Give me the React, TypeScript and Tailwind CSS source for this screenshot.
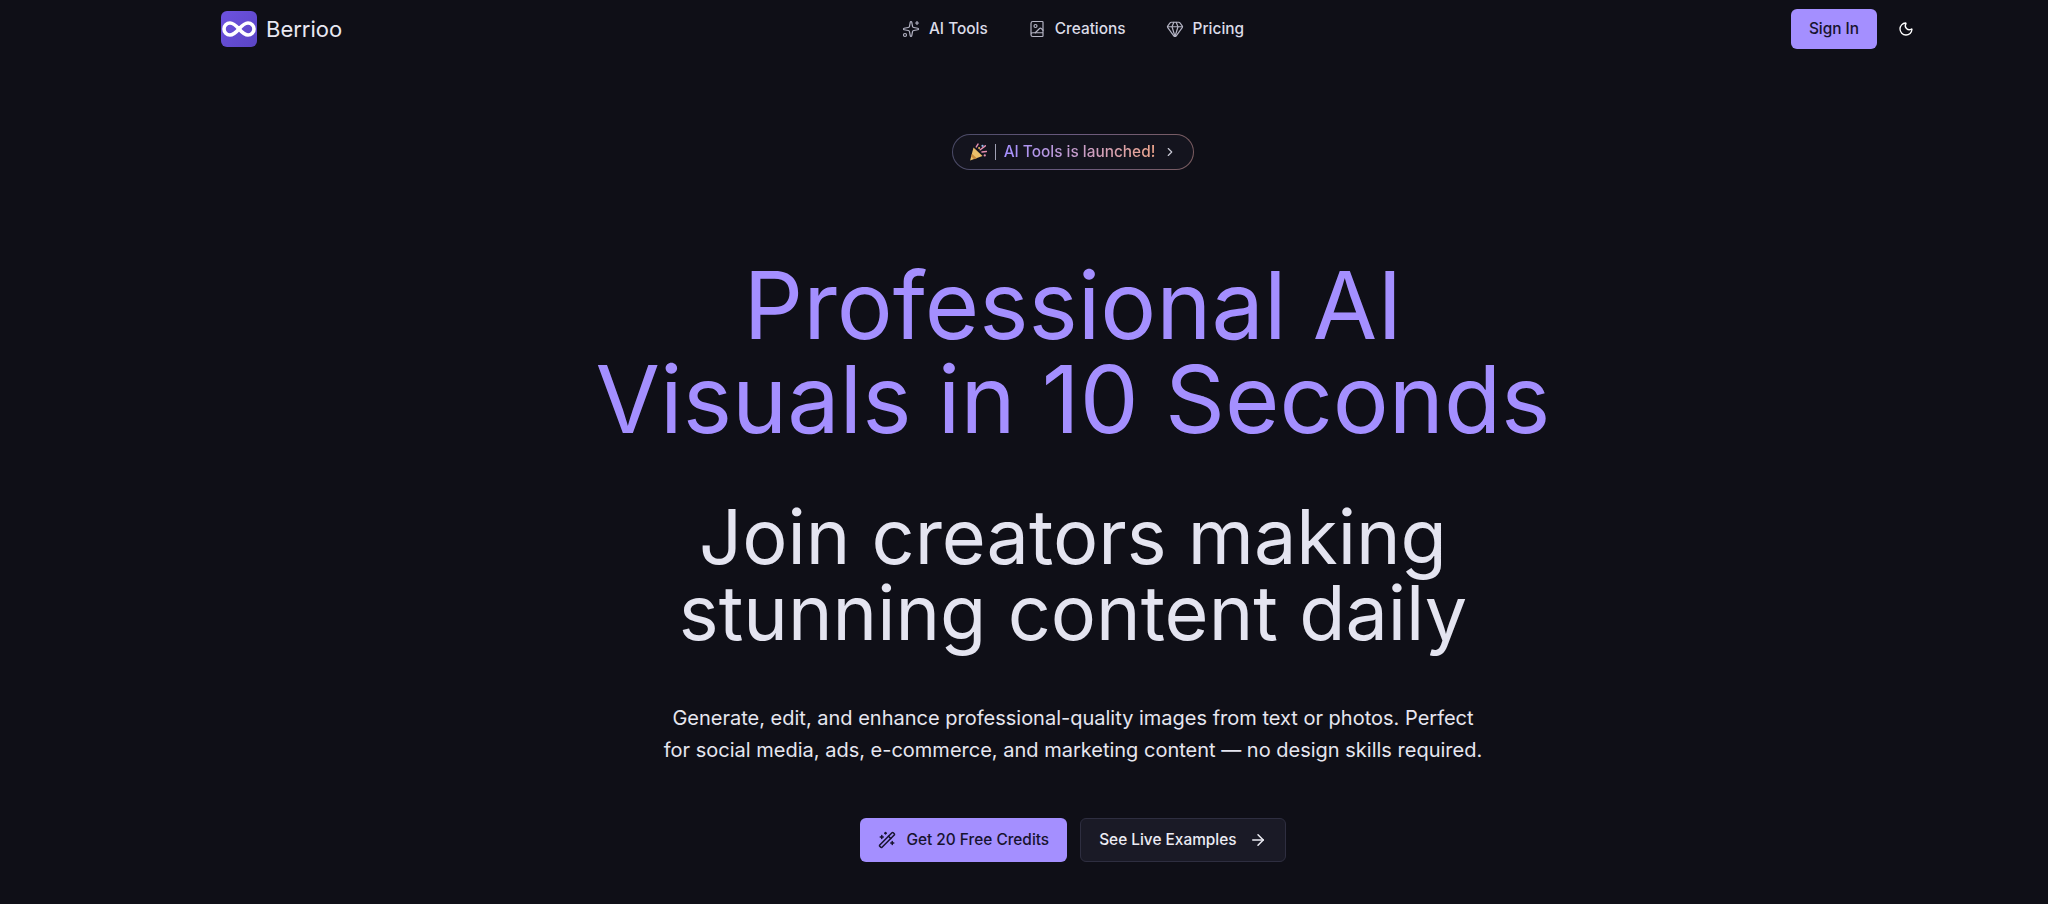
import { ArrowRight, BookImage, ChevronRight, Gem, Infinity as InfinityIcon, Moon, Sparkles, WandSparkles } from "lucide-react";

const links = [
  { label: "AI Tools", icon: Sparkles },
  { label: "Creations", icon: BookImage },
  { label: "Pricing", icon: Gem },
];

function Popper() {
  return (
    <svg viewBox="0 0 16 16" className="h-[18px] w-[18px] shrink-0">
      <path d="M1 15.5 L4 4 L12 11.5 Z" fill="#ecc06a" />
      <path d="M2.6 9.5 L7 13.5 L4.5 14.4 L2 12 Z" fill="#c98a3a" />
      <path d="M6.5 3.5 L8 1 M10 6 L14.5 2.5 M11.5 8 L15.5 7.5" stroke="#e58fb0" strokeWidth="1.3" strokeLinecap="round" />
      <circle cx="12" cy="2.5" r="1" fill="#8fb8e8" />
      <circle cx="9" cy="4.5" r="0.9" fill="#e9b95c" />
      <circle cx="14" cy="11" r="1" fill="#e58fb0" />
    </svg>
  );
}

export default function App() {
  return (
    <div className="h-[904px] overflow-hidden bg-[#0f0f17] pl-[98px] font-['Inter',sans-serif] text-[#e4e4f0]">
      <nav className="mx-auto flex h-[58px] w-[1704px] items-center justify-between">
        <div className="flex w-[400px] items-center gap-[9px]">
          <div className="flex h-9 w-9 items-center justify-center rounded-md bg-gradient-to-br from-[#6d52e0] to-[#5b45c4]">
            <InfinityIcon className="h-9 w-9 text-white" strokeWidth={2.4} />
          </div>
          <span className="text-[22px] text-[#e8e8f2]">Berrioo</span>
        </div>

        <div className="flex items-center gap-10">
          {links.map((l) => (
            <a key={l.label} className="flex items-center gap-[9px] text-[15.4px] font-[450] text-[#dcdce8]">
              <l.icon className="h-[18px] w-[18px] text-[#b4b4c4]" strokeWidth={1.6} />
              {l.label}
            </a>
          ))}
        </div>

        <div className="flex w-[400px] items-center justify-end">
          <button className="h-10 w-[86px] rounded-md bg-[#a48fff] text-[15.4px] font-[450] text-[#17132e]">Sign In</button>
          <div className="flex w-[48px] items-center pl-[21px]">
            <Moon className="h-4 w-4 shrink-0 text-white" strokeWidth={2} />
          </div>
        </div>
      </nav>

      <main className="flex flex-col items-center">
        <div className="mt-[76px] rounded-full bg-gradient-to-r from-[#4a4a66] via-[#6b5a80] to-[#7a5c60] p-px">
          <div className="flex h-[34px] items-center gap-[8px] rounded-full bg-[#14141e] px-4 text-[15.4px] font-[450]">
            <Popper />
            <span className="h-4 w-px bg-[#a0a0b4]"></span>
            <span className="bg-gradient-to-r from-[#a48fff] to-[#eda58c] bg-clip-text text-transparent">AI Tools is launched!</span>
            <ChevronRight className="h-3.5 w-3.5 text-[#c8c8d4]" />
          </div>
        </div>

        <h1 className="mt-[89px] text-center text-[93.4px] leading-[94px] font-normal text-[#a48fff]">
          Professional AI
          <br />
          Visuals in 10 Seconds
        </h1>

        <h2 className="mt-[52px] text-center text-[75.5px] leading-[76px] font-normal text-[#e4e4f0]">
          Join creators making
          <br />
          stunning content daily
        </h2>

        <p className="mt-[51px] text-center text-xl leading-8 text-[#e6e6f0]">
          Generate, edit, and enhance professional-quality images from text or photos. Perfect
          <br />
          for social media, ads, e-commerce, and marketing content — no design skills required.
        </p>

        <div className="mt-[52px] flex gap-[13px]">
          <button className="flex h-[44px] items-center gap-[10px] rounded-md bg-[#a48fff] px-[18px] text-[15.4px] font-[450] text-[#17132e]">
            <WandSparkles className="h-[18px] w-[18px]" />
            Get 20 Free Credits
          </button>
          <button className="flex h-[44px] items-center gap-3 rounded-md border border-[#2e2e40] bg-[#1a1a26] px-[18px] text-[15.4px] font-[450] text-[#ececf4]">
            See Live Examples
            <ArrowRight className="h-[18px] w-[18px]" />
          </button>
        </div>
      </main>
    </div>
  );
}
